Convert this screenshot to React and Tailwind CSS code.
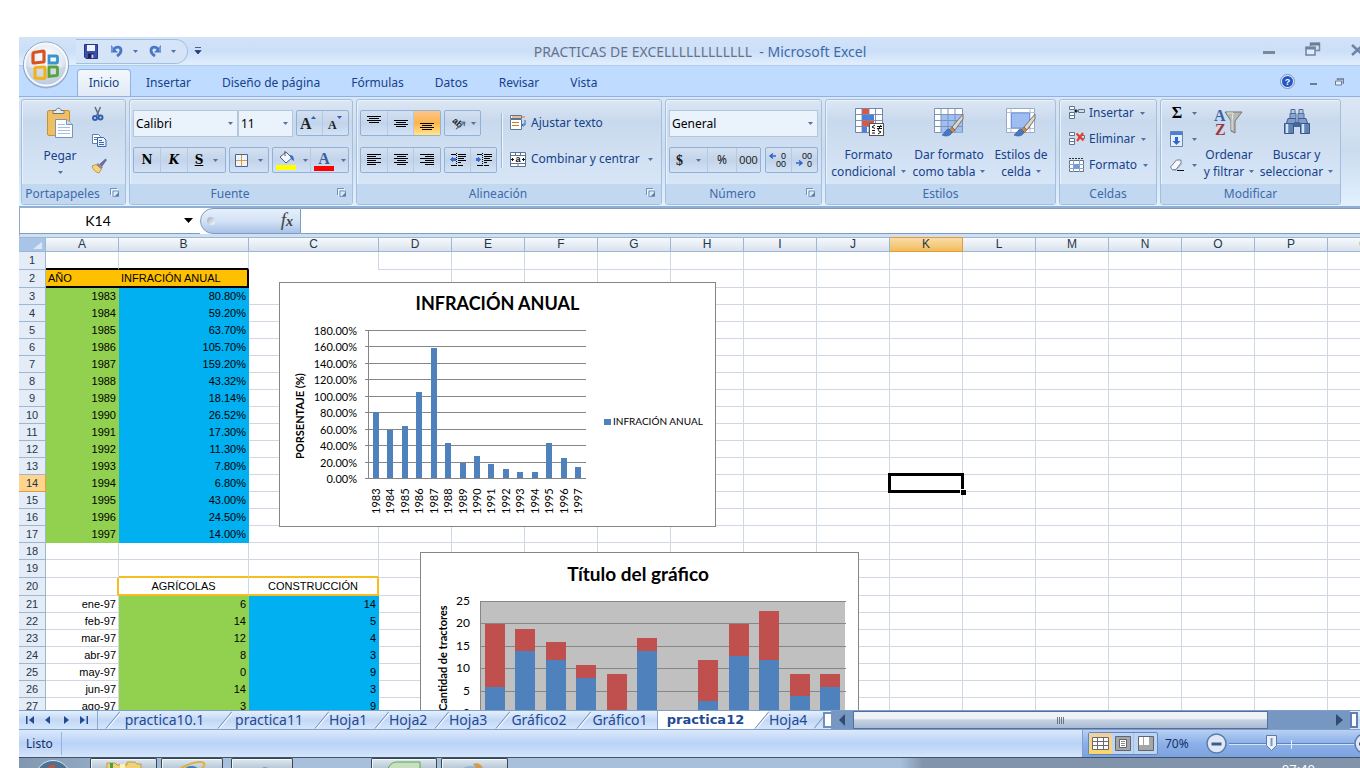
import React from "react";

const UI = "font-['Noto_Sans','Open_Sans',sans-serif]";

function Arrow({ className = "" }) {
  return (
    <svg viewBox="0 0 5 3" className={"h-[3px] w-[5px] shrink-0 " + className} aria-hidden="true">
      <path d="M0 0h5L2.500 3z" fill="#4f74a8" />
    </svg>
  );
}

function Launcher({ label }) {
  return (
    <button aria-label={label} className="absolute right-[5px] top-[3px] h-[11px] w-[11px]">
      <svg viewBox="0 0 11 11" width="11" height="11">
        <path d="M1.500 8V1.500H8" fill="none" stroke="#6f8fb8" />
        <path d="M2.500 9V2.500H9" fill="none" stroke="#f4f9ff" />
        <path d="M4 4h5.500v5.500H4z" fill="#dce8f6" stroke="#7b97ba" />
        <path d="M6 9h4V5z" fill="#5a7fae" />
      </svg>
    </button>
  );
}

function Group({ label, className, launcher, children }) {
  return (
    <section
      aria-label={label}
      className={
        "flex h-[106px] shrink-0 flex-col overflow-hidden rounded-[3px] border border-[#a3bfdd] bg-linear-to-b from-[#dce7f4] from-0% via-[#c9d9ed] via-20% to-[#dceafa] shadow-[inset_1px_1px_0_#e9f2fb] " +
        className
      }
    >
      <div className="flex flex-1 pt-[10px]">{children}</div>
      <div
        className={
          "relative h-[20px] whitespace-nowrap bg-[#c1d8f0] text-center leading-[19px] text-[#3e6aaa]" +
          (launcher ? " pr-[22px]" : "")
        }
      >
        {label}
        {launcher && <Launcher label={"Opciones de " + label} />}
      </div>
    </section>
  );
}

function Box({ className = "", children }) {
  return (
    <div
      className={
        "flex h-[26px] overflow-hidden rounded-[2px] border border-[#93b0d6] bg-linear-to-b from-[#d3e0f1] via-[#c3d4ea] to-[#d2e2f6] " +
        className
      }
    >
      {children}
    </div>
  );
}

function Tool({ label, className = "", children }) {
  return (
    <button
      aria-label={label}
      className={"flex h-full items-center justify-center border-r border-[#b4c9e4] last:border-r-0 " + className}
    >
      {children}
    </button>
  );
}

function Combo({ label, value, className }) {
  return (
    <label className={"relative block h-[27px] " + className}>
      <span className="sr-only">{label}</span>
      <select
        defaultValue={value}
        className="block h-full w-full appearance-none border border-[#b3c7e1] bg-[#eaf2fb] pl-[2px] text-[12px] leading-[24px] text-black outline-none"
      >
        <option>{value}</option>
      </select>
      <Arrow className="pointer-events-none absolute right-[5px] top-[12px]" />
    </label>
  );
}

function BigButton({ icon, lines, className = "" }) {
  return (
    <button className={"flex shrink-0 flex-col items-center leading-[17px] " + className}>
      <span className="flex h-[39px] items-start justify-center">{icon}</span>
      <span>{lines[0]}</span>
      <span className="flex items-center gap-[5px]">
        {lines[1]}
        <Arrow />
      </span>
    </button>
  );
}

function Lines({ rows }) {
  return (
    <svg width="16" height="16" viewBox="0 0 16 16" shapeRendering="crispEdges">
      {rows.map(([x, y, w], i) => (
        <rect key={i} x={x} y={y} width={w} height="1" fill="#000" />
      ))}
    </svg>
  );
}

const leftRows = [[1, 2, 14], [1, 4, 9], [1, 6, 14], [1, 8, 9], [1, 10, 14], [1, 12, 9]];
const centerRows = [[1, 2, 14], [4, 4, 9], [1, 6, 14], [4, 8, 9], [1, 10, 14], [4, 12, 9]];
const rightRows = [[1, 2, 14], [6, 4, 9], [1, 6, 14], [6, 8, 9], [1, 10, 14], [6, 12, 9]];
const topV = [[1, 1, 14], [3, 3, 10], [1, 5, 14], [3, 7, 10]];
const midV = [[1, 5, 14], [3, 7, 10], [1, 9, 14], [3, 11, 10]];
const botV = [[1, 8, 14], [3, 10, 10], [1, 12, 14], [3, 14, 10]];

function Indent({ flip }) {
  return (
    <svg width="18" height="16" viewBox="0 0 18 16" shapeRendering="crispEdges">
      <path d="M2 2.500h5M9 2.500h8M9 4.500h8M9 6.500h6M9 8.500h8M9 10.500h3M2 13.500h5M9 13.500h5" stroke="#000" />
      <path d="M7.500 1v14" stroke="#000" strokeDasharray="1 1" />
      <path d={flip ? "M6 7.500L3 4v2H1v3h2v2z" : "M1 7.500L4 4v2h3v3H4v2z"} fill="#3b6fd0" />
    </svg>
  );
}

function Orb() {
  return (
    <svg width="48" height="48" viewBox="0 0 48 48">
      <defs>
        <radialGradient id="orbFill" cx="50%" cy="35%" r="70%">
          <stop offset="0" stopColor="#ffffff" />
          <stop offset="0.55" stopColor="#e3e9f2" />
          <stop offset="1" stopColor="#9fb4d0" />
        </radialGradient>
      </defs>
      <circle cx="24" cy="24.500" r="23" fill="#7f9cc4" opacity="0.600" />
      <circle cx="24" cy="23.500" r="22.500" fill="url(#orbFill)" stroke="#8aa4c8" />
      <path d="M3 25a21 21 0 0 0 42 0c-12 4-30 4-42 0z" fill="#c3cfe0" opacity="0.600" />
      <circle cx="24" cy="23.500" r="21" fill="none" stroke="#f6f9fd" strokeWidth="2" />
      <path d="M12 11.500l9-1.500q1 0 1 1v9q0 1-1 1l-9 1q-1 0-1-1v-8q0-1 1-1.500z" fill="none" stroke="#d9531e" strokeWidth="3.200" />
      <path d="M27 15h7q1.500 0 1.500 1.500V21q0 1-1 1h-7.500z" fill="none" stroke="#3a93cf" strokeWidth="2.800" />
      <path d="M14 26.500l8-.5q1 0 1 1v9q0 1.500-1.500 1.500L14 37q-1 0-1-1v-8q0-1.500 1-1.500z" fill="none" stroke="#efb31b" strokeWidth="3.200" />
      <path d="M27 26h7.500q1 0 1 1v6.500q0 1-1 1L27 35.500z" fill="none" stroke="#57a239" strokeWidth="2.800" />
    </svg>
  );
}

function Undo({ flip }) {
  return (
    <svg width="14" height="14" viewBox="0 0 14 14" className={flip ? "-scale-x-100" : ""}>
      <path d="M3.500 5.500C6 2 11 2.500 11 6.500c0 2-1.500 4-4 5.500" fill="none" stroke="#4777c6" strokeWidth="2.800" />
      <path d="M1 1v7.500h7z" fill="#4777c6" />
      <path d="M2 2.500v5" stroke="#9dbdf0" />
    </svg>
  );
}

function Brush() {
  return (
    <g>
      <path d="M31 7L20 20l3 3L31 12z" fill="#d9d6cf" stroke="#77726a" />
      <path d="M20 20l-3 3 3 3 3-3z" fill="#c58a4c" stroke="#8a5a2a" strokeWidth="0.600" />
      <path d="M17 22c-3 0-4 4-7 6 4 2 9 1 10-3z" fill="#4a78bf" stroke="#2d559a" strokeWidth="0.600" />
    </g>
  );
}

const iconPaste = (
  <svg width="28" height="32" viewBox="0 0 28 32">
    <rect x="1.500" y="3.500" width="22" height="25" rx="1.500" fill="#f0bf62" stroke="#c7913a" />
    <path d="M7 6.500V3.500h3C10 .5 15 .5 15 3.500h3v3z" fill="#e7e9ec" stroke="#6e7681" />
    <path d="M9.500 12.500h11l6 5v13h-17z" fill="#fbfcff" stroke="#7a93b8" />
    <path d="M20.500 12.500v5h6" fill="#cddcf0" stroke="#7a93b8" />
    <path d="M12 17.500h7M12 20.500h12M12 23.500h12M12 26.500h12" stroke="#a9bcd8" />
  </svg>
);

const iconCut = (
  <svg width="14" height="16" viewBox="0 0 14 16">
    <path d="M4 1l4 9M9.500 1l-4 9" stroke="#5c6d86" strokeWidth="1.500" />
    <circle cx="4" cy="12" r="2" fill="none" stroke="#3361b0" strokeWidth="2" />
    <circle cx="9.500" cy="11.500" r="2" fill="none" stroke="#3361b0" strokeWidth="2" />
  </svg>
);

const iconCopy = (
  <svg width="16" height="16" viewBox="0 0 16 16">
    <path d="M1.500 2.500h6l2 2v7h-8z" fill="#fff" stroke="#5b7fb9" />
    <path d="M3 5.500h4M3 7.500h4" stroke="#5b7fb9" />
    <path d="M6.500 5.500h6l2.500 2.500v6.500H6.500z" fill="#eaf2ff" stroke="#3c66ad" />
    <path d="M8 8.500h3M8 10.500h5M8 12.500h5" stroke="#3c66ad" />
  </svg>
);

const iconPainter = (
  <svg width="16" height="16" viewBox="0 0 16 16">
    <path d="M14.500 1L9 6l2 2 4.500-6z" fill="#6b6f9a" stroke="#4a4f7c" strokeWidth="0.600" />
    <path d="M7 5l5 4-1.500 2L5 7z" fill="#8a7fb0" />
    <path d="M1 8l4-1.500 5.500 4.500L8 15c-3-.5-6-3-7-7z" fill="#f3d57a" stroke="#b58a32" strokeWidth="0.800" />
  </svg>
);

const iconCond = (
  <svg width="32" height="32" viewBox="0 0 32 32">
    <path d="M2.500 1.500h27v24h-27z" fill="#fff" stroke="#6f87ab" />
    <path d="M9 2h7v5H9zM9 13.500h12v6H9z" fill="#e8523b" />
    <path d="M9 7.500h12v6H9zM9 19.500h5v6H9z" fill="#4a7fdd" />
    <path d="M9 1.500v24M16 1.500v24M22.500 1.500v24M2.500 7.500h27M2.500 13.500h27M2.500 19.500h27" stroke="#6f87ab" strokeWidth="0.900" />
    <rect x="16.500" y="16.500" width="14" height="12" fill="#fff" stroke="#555" />
    <path d="M22 18l-3 2 3 1.500M19 23.500h3M19 26h3M24 19.500h5M24 21.500h5M28 18l-3 5M25 23.500l3 1.500-3 2" fill="none" stroke="#111" />
  </svg>
);

const iconTable = (
  <svg width="34" height="32" viewBox="0 0 34 32">
    <path d="M2.500 1.500h28v24h-28z" fill="#fff" stroke="#7f93b3" />
    <path d="M9 7.500h21v18H9z" fill="#9fc0f4" />
    <path d="M9 1.500v24M16 1.500v24M23 1.500v24M2.500 7.500h28M2.500 13.500h28M2.500 19.500h28" stroke="#7f93b3" />
    <Brush />
  </svg>
);

const iconStyles = (
  <svg width="34" height="32" viewBox="0 0 34 32">
    <path d="M2.500 1.500h28v24h-28z" fill="#fff" stroke="#9aabc6" />
    <path d="M7 1.500v24M26 1.500v24M2.500 5.500h28M2.500 21.500h28" stroke="#b3c0d6" />
    <path d="M7.500 6h18v15h-18z" fill="#9dbdf3" stroke="#6d95dd" />
    <Brush />
  </svg>
);

const iconSort = (
  <svg width="32" height="32" viewBox="0 0 32 32">
    <text x="1" y="14" fontFamily="Liberation Serif" fontWeight="700" fontSize="16" fill="#3b62a8">A</text>
    <text x="2" y="28" fontFamily="Liberation Serif" fontWeight="700" fontSize="16" fill="#a03a3a">Z</text>
    <path d="M12 5h17l-7 9v12l-4-2V14z" fill="#b9b9b4" stroke="#77776f" />
    <path d="M14 6h6l-1 8v9" fill="none" stroke="#e9e9e4" />
  </svg>
);

const iconFind = (
  <svg width="30" height="32" viewBox="0 0 30 32">
    <path d="M9 2.500h4v4H9zM17 2.500h4v4h-4z" fill="#b9cce8" stroke="#4f6c99" />
    <path d="M8 6.500h6v5H8zM16 6.500h6v5h-6z" fill="#8ba7d2" stroke="#4f6c99" />
    <path d="M6 11.500h8v5h2v-5h8l2 6H4z" fill="#7f9dcc" stroke="#3f5c8d" />
    <path d="M2.500 16.500h9v10h-9zM18.500 16.500h9v10h-9z" fill="#5f82b8" stroke="#3a5788" />
    <path d="M5 17v9M21 17v9" stroke="#d5e2f5" strokeWidth="2.500" />
    <path d="M12 15h6v5h-6z" fill="#45659b" />
  </svg>
);

function CellsIcon({ kind }) {
  return (
    <svg width="17" height="16" viewBox="0 0 17 16">
      {kind === "fmt" ? (
        <g>
          <path d="M1.500 3.500h14v11h-14z" fill="#fff" stroke="#5d7391" />
          <path d="M5.500 3v12M11.500 3v12M1 7.500h15M1 11.500h15" stroke="#8da3c2" />
          <path d="M6 7.500h5v4H6z" fill="#6d9be8" />
          <path d="M1 1.500h14" stroke="#333" strokeDasharray="2 1" />
        </g>
      ) : (
        <g>
          <path d="M1.500 1.500h5v3h-5zM1.500 7.500h5v3h-5zM1.500 10.500h5v3h-5z" fill="#fff" stroke="#5d7391" />
          <path d="M10.500 4.500h6v3h-6z" fill="#cfe0f5" stroke="#5d7391" />
          {kind === "ins" ? (
            <path d="M10 6H7M8.500 4.500L7 6l1.500 1.500" fill="none" stroke="#111" strokeWidth="1.200" />
          ) : (
            <path d="M8.500 2.500l7 7M15 2l-6 8" stroke="#e8402a" strokeWidth="2.200" />
          )}
        </g>
      )}
    </svg>
  );
}

function TitleBar() {
  return (
    <header className="relative flex h-[29px] shrink-0 items-center border-b border-[#b0cdec] bg-linear-to-b from-[#d3e3f8] via-[#cbdff8] to-[#e2effc]">
      <div className="ml-[57px] flex h-[25px] w-[112px] items-center rounded-r-[13px] border-y border-r border-[#a5bfdf] bg-[#d5e4f6]">
        <button aria-label="Guardar" className="ml-[8px]">
          <svg width="14" height="15" viewBox="0 0 14 15">
            <path d="M.5 .5h13v14H2l-1.500-1.500z" fill="#3b4fb0" stroke="#27347f" />
            <path d="M3 1h8v6H3z" fill="#eef4ff" />
            <path d="M4 9.500h6V14H4z" fill="#1b2350" />
            <path d="M7.500 10.500h2V14h-2z" fill="#cfd8ee" />
          </svg>
        </button>
        <button aria-label="Deshacer" className="ml-[12px] flex items-center gap-[9px]">
          <Undo />
          <Arrow />
        </button>
        <button aria-label="Rehacer" className="ml-[10px] flex items-center gap-[9px]">
          <Undo flip />
          <Arrow />
        </button>
      </div>
      <button aria-label="Personalizar barra" className="ml-[6px]">
        <svg width="8" height="8" viewBox="0 0 8 8">
          <path d="M1 0.500h6M1 3.500h6L4 7z" fill="#23407a" stroke="#23407a" strokeWidth="0.800" />
        </svg>
      </button>
      <h1 className="flex-1 whitespace-pre pr-[65px] text-center text-[14px] text-[#3e6aaa]">
        <span className="text-[#68718c]">PRACTICAS DE EXCELLLLLLLLLLLL</span>
        {"  - Microsoft Excel"}
      </h1>
      <div className="flex items-center gap-[30px]">
        <button aria-label="Minimizar" className="pt-[4px]">
          <svg width="12" height="4" viewBox="0 0 12 4"><path d="M0 0h12v3H0z" fill="#7c8798" /></svg>
        </button>
        <button aria-label="Restaurar" className="-mt-[4px]">
          <svg width="16" height="14" viewBox="0 0 16 14">
            <path d="M5.500 4V1.500h9v7h-4" fill="none" stroke="#7c8798" strokeWidth="1.500" />
            <path d="M5 2h10" stroke="#6f7b8e" strokeWidth="3" />
            <path d="M1 5.500h9v7.500h-9z" fill="#e2ecf8" stroke="#6d83a8" strokeWidth="1.500" />
            <path d="M.5 6h10" stroke="#6d83a8" strokeWidth="3" />
          </svg>
        </button>
        <button aria-label="Cerrar" className="-mt-[3px]">
          <svg width="9" height="12" viewBox="0 0 9 12">
            <path d="M1 1l11 10M12 1L1 11" stroke="#6d84a8" strokeWidth="2.500" />
          </svg>
        </button>
      </div>
      <button aria-label="Botón de Office" className="absolute left-[3px] top-[4px] z-10">
        <Orb />
      </button>
    </header>
  );
}

const menuTabs = ["Insertar", "Diseño de página", "Fórmulas", "Datos", "Revisar", "Vista"];

function MenuTabs() {
  return (
    <nav className="flex h-[30px] shrink-0 items-end bg-[#bfdbff]">
      <button className="ml-[58px] h-[27px] w-[54px] rounded-t-[4px] border border-b-0 border-[#8db2e3] bg-linear-to-b from-[#f3f8fd] to-[#e0eaf6] text-[#15428b]">
        Inicio
      </button>
      <div className="flex flex-1 gap-[31px] pl-[15px]">
        {menuTabs.map((t) => (
          <button key={t} className="h-[26px] text-[12px] text-[#15428b]">{t}</button>
        ))}
      </div>
      <div className="mb-[7px] mr-[16px] flex items-center gap-[15px]">
        <button aria-label="Ayuda">
          <svg width="15" height="15" viewBox="0 0 15 15">
            <circle cx="7.500" cy="7.500" r="7" fill="#dfeaf8" stroke="#7793c0" />
            <circle cx="7.500" cy="7.500" r="5.500" fill="#2456c4" />
            <text x="7.500" y="11" textAnchor="middle" fontFamily="Liberation Sans" fontWeight="700" fontSize="9" fill="#fff">?</text>
          </svg>
        </button>
        <button aria-label="Minimizar libro" className="pt-[5px]">
          <svg width="7" height="3" viewBox="0 0 7 3"><path d="M0 0h7v2H0z" fill="#6f7b8e" /></svg>
        </button>
        <button aria-label="Restaurar libro" className="pl-[3px]">
          <svg width="9" height="8" viewBox="0 0 9 8">
            <path d="M2.500 2V1h6v4H7.500" fill="none" stroke="#6f7b8e" strokeWidth="1.500" />
            <path d="M.5 3h6v4h-6z" fill="#e7effa" stroke="#6f7b8e" />
          </svg>
        </button>
      </div>
    </nav>
  );
}

function Ribbon() {
  return (
    <div className="flex shrink-0 gap-[3px] border-b-2 border-t border-b-[#8fb0d4] border-t-[#8db2e3] bg-linear-to-b from-[#dbe6f4] via-[#cbdcf0] to-[#e3f1fd] pb-[1px] pl-[2px] pt-[2px] text-[12px] text-[#15428b]">
      <Group label="Portapapeles" className="w-[105px]" launcher>
        <button className="-mt-[3px] ml-[14px] flex w-[48px] flex-col items-center">
          {iconPaste}
          <span className="mt-[7px] leading-[20px]">Pegar</span>
          <Arrow className="mt-[5px]" />
        </button>
        <div className="-mt-[4px] ml-[7px] flex flex-col gap-[10px]">
          <button aria-label="Cortar">{iconCut}</button>
          <button aria-label="Copiar">{iconCopy}</button>
          <button aria-label="Copiar formato">{iconPainter}</button>
        </div>
      </Group>

      <Group label="Fuente" className="w-[224px]" launcher>
        <div className="flex flex-col gap-[10px] pl-[3px]">
          <div className="flex">
            <Combo label="Fuente" value="Calibri" className="w-[105px]" />
            <Combo label="Tamaño" value="11" className="w-[55px]" />
            <Box className="ml-[3px] w-[53px]">
              <Tool label="Aumentar tamaño" className="w-[26px]">
                <svg width="18" height="20" viewBox="0 0 18 20">
                  <text x="0" y="16" fontFamily="Liberation Serif" fontWeight="700" fontSize="16" fill="#222">A</text>
                  <path d="M11 6h5l-2.500-3z" fill="#2d5fb5" />
                </svg>
              </Tool>
              <Tool label="Disminuir tamaño" className="w-[26px]">
                <svg width="18" height="20" viewBox="0 0 18 20">
                  <text x="2" y="16" fontFamily="Liberation Serif" fontWeight="700" fontSize="12" fill="#222">A</text>
                  <path d="M11 3h5l-2.500 3z" fill="#2d5fb5" />
                </svg>
              </Tool>
            </Box>
          </div>
          <div className="flex gap-[3px]">
            <Box className="w-[93px] font-['DejaVu_Serif',serif] text-[12px] font-bold leading-[16px] text-black">
              <Tool label="Negrita" className="w-[27px]">N</Tool>
              <Tool label="Cursiva" className="w-[27px]"><i>K</i></Tool>
              <Tool label="Subrayado" className="flex-1 gap-[10px]">
                <span className="underline">S</span>
                <Arrow />
              </Tool>
            </Box>
            <Box className="w-[40px]">
              <Tool label="Bordes" className="w-full gap-[10px]">
                <svg width="13" height="13" viewBox="0 0 13 13">
                  <path d="M.5 .5h12v12H.5z" fill="#eef4fc" stroke="#4b678f" />
                  <path d="M6.500 1v11M1 6.500h11" stroke="#e09a3c" />
                </svg>
                <Arrow />
              </Tool>
            </Box>
            <Box className="w-[77px]">
              <Tool label="Color de relleno" className="w-[38px] gap-[7px]">
                <svg width="20" height="20" viewBox="0 0 20 20">
                  <path d="M4 7l6-5 6 6-6 5z" fill="#f3f6fb" stroke="#4d5f7c" />
                  <path d="M9 6V1" stroke="#4d5f7c" />
                  <path d="M14 5c3 0 4 2 4 6-2-1-3-2-4-4z" fill="#3f73c8" />
                  <path d="M0 15h20v5H0z" fill="#ffff00" />
                </svg>
                <Arrow />
              </Tool>
              <Tool label="Color de fuente" className="w-[37px] gap-[7px]">
                <svg width="20" height="22" viewBox="0 -2 20 22">
                  <text x="10" y="13" textAnchor="middle" fontFamily="Liberation Serif" fontWeight="700" fontSize="16" fill="#3c5f9e">A</text>
                  <path d="M0 15h20v5H0z" fill="#ff0000" />
                </svg>
                <Arrow />
              </Tool>
            </Box>
          </div>
        </div>
      </Group>

      <Group label="Alineación" className="w-[306px]" launcher>
        <div className="flex flex-col gap-[11px] pl-[3px]">
          <div className="flex gap-[3px]">
            <Box className="w-[81px]">
              <Tool label="Alinear arriba" className="w-[27px]"><Lines rows={topV} /></Tool>
              <Tool label="Alinear en el medio" className="w-[26px]"><Lines rows={midV} /></Tool>
              <Tool label="Alinear abajo" className="w-[26px] bg-linear-to-b from-[#fbc68b] via-[#ffb347] to-[#ffe68c]"><Lines rows={botV} /></Tool>
            </Box>
            <Box className="w-[37px]">
              <Tool label="Orientación" className="w-full gap-[4px]">
                <svg width="18" height="18" viewBox="0 0 18 18">
                  <text x="3" y="9" fontFamily="Liberation Sans" fontWeight="700" fontSize="9" fill="#222" transform="rotate(42 5 8)">ab</text>
                  <path d="M7 15L16 8M16 8h-4M16 8l-1 4" fill="none" stroke="#5b6d88" strokeWidth="1.200" />
                </svg>
                <Arrow />
              </Tool>
            </Box>
          </div>
          <div className="flex gap-[3px]">
            <Box className="w-[81px]">
              <Tool label="Izquierda" className="w-[27px]"><Lines rows={leftRows} /></Tool>
              <Tool label="Centrar" className="w-[26px]"><Lines rows={centerRows} /></Tool>
              <Tool label="Derecha" className="w-[26px]"><Lines rows={rightRows} /></Tool>
            </Box>
            <Box className="w-[53px]">
              <Tool label="Disminuir sangría" className="w-[26px]"><Indent /></Tool>
              <Tool label="Aumentar sangría" className="w-[25px]"><Indent flip /></Tool>
            </Box>
          </div>
        </div>
        <div className="ml-[4px] mt-[3px] h-[55px] w-[2px] border-r border-[#eef5fd] bg-[#9db8d8]" />
        <div className="ml-[7px] flex flex-col gap-[10px]">
          <button className="flex h-[26px] items-center gap-[5px]">
            <svg width="16" height="16" viewBox="0 0 16 16">
              <path d="M.5 .5h11v3H.5zM.5 4.500h11v10H.5z" fill="#fff" stroke="#5d7391" />
              <path d="M2 2h13M2 7.500h7M2 10.500h7" stroke="#c47f2d" />
              <path d="M15 5v5h-3M13.500 8.500L12 10l1.500 1.500" fill="none" stroke="#2f62b5" />
            </svg>
            Ajustar texto
          </button>
          <button className="flex h-[26px] items-center gap-[5px]">
            <svg width="16" height="15" viewBox="0 0 16 15">
              <path d="M.5 .5h15v14H.5z" fill="#fff" stroke="#5d7391" />
              <path d="M1 3.500h14M1 11.500h14M5.500 1v3M10.500 1v3M8 11v3" stroke="#5d7391" />
              <path d="M1 7.500h3M12 7.500h3M2.500 6v3M13.500 6v3" stroke="#111" />
              <text x="8" y="10" textAnchor="middle" fontFamily="Liberation Sans" fontWeight="700" fontSize="9" fill="#111">a</text>
            </svg>
            Combinar y centrar
            <Arrow className="ml-[3px]" />
          </button>
        </div>
      </Group>

      <Group label="Número" className="w-[157px]" launcher>
        <div className="flex flex-col gap-[10px] pl-[3px]">
          <Combo label="Formato de número" value="General" className="w-[149px]" />
          <div className="flex gap-[4px] text-[#222]">
            <Box className="w-[92px]">
              <Tool label="Moneda" className="w-[38px] gap-[13px]">
                <span className="font-['Liberation_Serif',serif] text-[14px] font-bold">$</span>
                <Arrow />
              </Tool>
              <Tool label="Porcentaje" className="w-[29px]">%</Tool>
              <Tool label="Millares" className="flex-1">
                <span className="font-['Liberation_Sans_Narrow','Liberation_Sans',sans-serif] text-[11px]">000</span>
              </Tool>
            </Box>
            <Box className="w-[53px]">
              {["left", "right"].map((d) => (
                <Tool key={d} label={d === "left" ? "Aumentar decimales" : "Disminuir decimales"} className="w-[26px]">
                  <svg width="18" height="18" viewBox="0 0 18 18" fontFamily="Liberation Sans" fontSize="9" fill="#111">
                    <text x="17" y="8" textAnchor="end">{d === "left" ? "0" : "00"}</text>
                    <text x="17" y="16" textAnchor="end">{d === "left" ? "00" : "0"}</text>
                    {d === "left" ? (
                      <path d="M1 5h6M4 2.500L1 5l3 2.500" fill="none" stroke="#2f62c5" strokeWidth="1.400" />
                    ) : (
                      <path d="M1 12h6M4 9.500L7 12l-3 2.500" fill="none" stroke="#2f62c5" strokeWidth="1.400" />
                    )}
                  </svg>
                </Tool>
              ))}
            </Box>
          </div>
        </div>
      </Group>

      <Group label="Estilos" className="w-[231px]">
        <div className="-mt-[3px] flex gap-[3px] pl-[4px]">
          <BigButton icon={iconCond} lines={["Formato", "condicional"]} className="w-[77px]" />
          <BigButton icon={iconTable} lines={["Dar formato", "como tabla"]} className="w-[78px]" />
          <BigButton icon={iconStyles} lines={["Estilos de", "celda"]} className="w-[60px]" />
        </div>
      </Group>

      <Group label="Celdas" className="w-[98px]">
        <div className="-mt-[10px] flex flex-col pl-[8px]">
          {[["ins", "Insertar"], ["del", "Eliminar"], ["fmt", "Formato"]].map(([k, t]) => (
            <button key={k} className="flex h-[26px] items-center gap-[4px]">
              <CellsIcon kind={k} />
              {t}
              <Arrow className="ml-[2px]" />
            </button>
          ))}
        </div>
      </Group>

      <Group label="Modificar" className="w-[181px]">
        <div className="-mt-[10px] flex flex-col pl-[8px]">
          <button aria-label="Autosuma" className="flex h-[26px] items-center gap-[7px]">
            <span className="w-[16px] text-center font-['Liberation_Serif',serif] text-[16px] font-bold text-black">Σ</span>
            <Arrow />
          </button>
          <button aria-label="Rellenar" className="flex h-[26px] items-center gap-[7px]">
            <svg width="16" height="16" viewBox="0 0 16 16">
              <path d="M1.500 .5h12v15h-12z" fill="#e4eefc" stroke="#6b84aa" />
              <path d="M2 1h11v3H2z" fill="#4b7fdc" />
              <path d="M6 6h3v4h2.500l-4 4-4-4H6z" fill="#2f66cf" />
            </svg>
            <Arrow />
          </button>
          <button aria-label="Borrar" className="flex h-[26px] items-center gap-[7px]">
            <svg width="16" height="14" viewBox="0 0 16 14">
              <path d="M1.500 9l6-7h4.500v3L7 11.500H3z" fill="#f7f9fc" stroke="#71809a" />
              <path d="M3 12l4 .5 6-7" fill="none" stroke="#9fb0c8" />
              <path d="M8 12.500h7" stroke="#111" />
            </svg>
            <Arrow />
          </button>
        </div>
        <div className="-mt-[3px] flex pl-[3px]">
          <BigButton icon={iconSort} lines={["Ordenar", "y filtrar"]} className="w-[58px]" />
          <BigButton icon={iconFind} lines={["Buscar y", "seleccionar"]} className="w-[77px]" />
        </div>
      </Group>
    </div>
  );
}

function FormulaBar() {
  return (
    <div className="flex h-[29px] shrink-0 border-b-[3px] border-l border-b-[#cfe0f5] border-l-[#8ba6c8] bg-white">
      <input
        aria-label="Cuadro de nombres"
        defaultValue="K14"
        className="w-[156px] border-b border-[#7f9cc0] bg-white text-center font-['Lato',sans-serif] text-[14px] text-black outline-none"
      />
      <button aria-label="Nombres" className="flex w-[24px] items-center justify-center border-b border-[#7f9cc0]">
        <svg width="9" height="5" viewBox="0 0 9 5"><path d="M0 0h9L4.500 5z" fill="#000" /></svg>
      </button>
      <div className="flex w-[101px] items-center justify-between rounded-l-[13px] border border-[#7f9cc0] bg-linear-to-b from-[#e7f0fb] via-[#d3e2f5] to-[#a8c2e6] pl-[6px] pr-[7px]">
        <span className="h-[8px] w-[8px] rounded-full bg-linear-to-br from-[#9caac0] to-white" />
        <button aria-label="Insertar función" className="font-['Liberation_Serif',serif] text-[19px] italic leading-[20px] text-[#444]">
          f<span className="text-[14px] font-bold">x</span>
        </button>
      </div>
      <input aria-label="Barra de fórmulas" className="min-w-0 flex-1 border-b border-t border-[#7f9cc0] bg-white outline-none" />
    </div>
  );
}

const columns = "ABCDEFGHIJKLMNOPQ".split("");
const years = [
  ["1983", 80.8], ["1984", 59.2], ["1985", 63.7], ["1986", 105.7], ["1987", 159.2],
  ["1988", 43.32], ["1989", 18.14], ["1990", 26.52], ["1991", 17.3], ["1992", 11.3],
  ["1993", 7.8], ["1994", 6.8], ["1995", 43], ["1996", 24.5], ["1997", 14],
];
const months = [
  ["ene-97", 6, 14], ["feb-97", 14, 5], ["mar-97", 12, 4], ["abr-97", 8, 3],
  ["may-97", 0, 9], ["jun-97", 14, 3], ["ago-97", 3, 9],
];

const grid = "border-b border-r border-[#d0d7e5] ";
const green = "border-b border-r border-[#92d050] bg-[#92d050] ";
const blue = "border-b border-r border-[#00b0f0] bg-[#00b0f0] ";

function cellFor(col, row) {
  if (row === 1) {
    if (col === "A" || col === "B") return { c: "border-b-2 border-r border-b-black border-r-[#d0d7e5]" };
    if (col === "C") return { c: "border-r border-[#d0d7e5]" };
  }
  if (row === 2) {
    if (col === "A") return { c: "border-b-2 border-black bg-[#ffc000] text-left", t: "AÑO" };
    if (col === "B") return { c: "border-b-2 border-r-2 border-black bg-[#ffc000] text-left", t: "INFRACIÓN ANUAL" };
    if (col === "C") return { c: "" };
  }
  if (row >= 3 && row <= 17) {
    if (col === "A") return { c: green + "text-right", t: years[row - 3][0] };
    if (col === "B") return { c: blue + "text-right", t: years[row - 3][1].toFixed(2) + "%" };
  }
  if (row === 19 && (col === "B" || col === "C"))
    return { c: "border-b-2 border-r border-b-[#f5bd1f] border-r-[#d0d7e5]" };
  if (row === 20) {
    if (col === "A") return { c: "border-b border-r-2 border-b-[#d0d7e5] border-r-[#f5bd1f]" };
    if (col === "B") return { c: "border-b-2 border-r border-b-[#f5bd1f] border-r-[#d0d7e5] text-center", t: "AGRÍCOLAS" };
    if (col === "C") return { c: "border-b-2 border-r-2 border-[#f5bd1f] text-center", t: "CONSTRUCCIÓN" };
  }
  if (row >= 21 && months[row - 21]) {
    const m = months[row - 21];
    if (col === "A") return { c: grid + "text-right", t: m[0] };
    if (col === "B") return { c: green + "text-right", t: m[1] };
    if (col === "C") return { c: blue + "text-right", t: m[2] };
  }
  return { c: grid };
}

function InflationChart() {
  const base = 478.5;
  const step = 217 / 15;
  return (
    <svg
      className="absolute left-[260px] top-[45px]"
      width="437"
      height="245"
      viewBox="279 282 437 245"
      fontFamily="Lato, sans-serif"
      fontSize="11"
      shapeRendering="crispEdges"
      role="img"
      aria-label="INFRACIÓN ANUAL"
    >
      <rect x="279.500" y="282.500" width="436" height="244" fill="#fff" stroke="#868686" />
      <text x="497.500" y="310" textAnchor="middle" fontSize="18" fontWeight="700">INFRACIÓN ANUAL</text>
      <text transform="translate(304 459) rotate(-90)" fontSize="11" fontWeight="700">PORSENTAJE (%)</text>
      {Array.from({ length: 10 }, (_, i) => {
        const y = Math.round(base - (i * 148) / 9 - 0.5) + 0.5;
        return (
          <g key={i}>
            <path d={"M365 " + y + "H586"} stroke="#868686" />
            <text x="357" y={y + 4} textAnchor="end">{(i * 20).toFixed(2) + "%"}</text>
          </g>
        );
      })}
      <path d="M368.500 330V479" stroke="#868686" />
      {years.map(([year, v], i) => {
        const cx = 368.5 + step * (i + 0.5);
        const h = Math.round((v * 147) / 180);
        return (
          <g key={year}>
            <rect x={Math.round(cx - 3)} y={478 - h} width="6" height={h} fill="#4f81bd" />
            <text transform={"translate(" + (cx + 4) + " 514) rotate(-90)"}>{year}</text>
          </g>
        );
      })}
      <rect x="604" y="419" width="7" height="6" fill="#4f81bd" />
      <text x="613" y="425" fontSize="10">INFRACIÓN ANUAL</text>
    </svg>
  );
}

const stacks = [
  [6, 14], [14, 5], [12, 4], [8, 3], [0, 9], [14, 3],
  [0, 0], [3, 9], [13, 7], [12, 11], [4, 5], [6, 3],
];

function TractorChart() {
  const y = (v) => Math.round(714 - v * 4.5);
  return (
    <svg
      className="absolute left-[401px] top-[315px]"
      width="439"
      height="240"
      viewBox="420 552 439 240"
      fontFamily="Lato, sans-serif"
      fontSize="12"
      shapeRendering="crispEdges"
      role="img"
      aria-label="Título del gráfico"
    >
      <rect x="420.500" y="552.500" width="438" height="239" fill="#fff" stroke="#868686" />
      <text x="638" y="581" textAnchor="middle" fontSize="19" fontWeight="700">Título del gráfico</text>
      <text transform="translate(447 711) rotate(-90)" fontSize="11" fontWeight="700">Cantidad de tractores</text>
      <rect x="481" y="601" width="364" height="113" fill="#c0c0c0" />
      {[0, 5, 10, 15, 20, 25].map((v) => (
        <g key={v}>
          <path d={"M480 " + (y(v) - 0.5) + "H846"} stroke="#868686" />
          <text x="470" y={y(v) + 3} textAnchor="end">{v}</text>
        </g>
      ))}
      <path d="M480.500 601V714" stroke="#868686" />
      {stacks.map(([a, b], i) => {
        const x = Math.round(485 + i * 30.45);
        return (
          <g key={i}>
            <rect x={x} y={y(a + b)} width="20" height={y(a) - y(a + b)} fill="#c0504d" />
            <rect x={x} y={y(a)} width="20" height={714 - y(a)} fill="#4f81bd" />
          </g>
        );
      })}
    </svg>
  );
}

function Sheet() {
  return (
    <main className="relative min-h-0 flex-1 overflow-hidden bg-white">
      <table className="w-[1252px] table-fixed border-separate border-spacing-0 font-['Liberation_Sans',Arial,sans-serif] text-[11px] leading-[15px] text-black">
        <colgroup>
          <col className="w-[27px]" />
          {columns.map((c) => (
            <col key={c} className={c === "B" || c === "C" ? "w-[130px]" : "w-[73px]"} />
          ))}
        </colgroup>
        <thead>
          <tr className="h-[15px] text-[12px] leading-[13px]">
            <th aria-label="Seleccionar todo" className="border-b border-r border-t border-[#9eb6ce] bg-[#a9c4e9] p-0">
              <svg width="26" height="13" viewBox="0 0 26 13" className="block"><path d="M23 4v7h-9z" fill="#dce8f8" /></svg>
            </th>
            {columns.map((c) => (
              <th
                key={c}
                scope="col"
                className={
                  "border-b border-r border-t p-0 font-normal text-[#26364a] " +
                  (c === "K"
                    ? "border-[#e59a3c] bg-linear-to-b from-[#f9dca6] to-[#f1bd59]"
                    : "border-[#9eb6ce] bg-linear-to-b from-[#f7fafd] to-[#d8e1ed]")
                }
              >
                {c}
              </th>
            ))}
          </tr>
        </thead>
        <tbody>
          {Array.from({ length: 27 }, (_, i) => i + 1).map((row) => (
            <tr key={row} className={[1, 2, 19, 20].includes(row) ? "h-[18px]" : "h-[17px]"}>
              <th
                scope="row"
                className={
                  "border-b border-r p-0 font-normal text-[#26364a] " +
                  (row === 14 ? "border-[#e59a3c] bg-[#ffd58d]" : "border-[#9eb6ce] bg-[#e4ecf7]")
                }
              >
                {row}
              </th>
              {columns.map((col) => {
                const { c, t } = cellFor(col, row);
                const active = col === "K" && row === 14;
                return (
                  <td key={col} className={"whitespace-nowrap px-[2px] py-0 " + c + (active ? " relative" : "")}>
                    {t}
                    {active && (
                      <span className="absolute -bottom-[2px] -left-[2px] -right-[2px] -top-[2px] border-[3px] border-black">
                        <span className="absolute -bottom-[5px] -right-[5px] h-[6px] w-[6px] border-l border-t border-white bg-black" />
                      </span>
                    )}
                  </td>
                );
              })}
            </tr>
          ))}
        </tbody>
      </table>
      <InflationChart />
      <TractorChart />
    </main>
  );
}

const sheetTabs = [
  ["practica10.1", "w-[112px]"],
  ["practica11", "w-[97px]"],
  ["Hoja1", "w-[60px]"],
  ["Hoja2", "w-[60px]"],
  ["Hoja3", "w-[61px]"],
  ["Gráfico2", "w-[81px]"],
  ["Gráfico1", "w-[81px]"],
  ["practica12", "w-[97px]"],
  ["Hoja4", "w-[60px]"],
];

function SheetTabs() {
  const nav = [
    ["Primera hoja", "M1 1h1.500v8H1zM9 1v8L4 5z"],
    ["Hoja anterior", "M7 1v8L2 5z"],
    ["Hoja siguiente", "M3 1v8l5-4z"],
    ["Última hoja", "M1 1v8l5-4zM7.500 1H9v8H7.500z"],
  ];
  return (
    <div className="flex h-[20px] shrink-0 border-b border-t border-[#7f9fcb] bg-linear-to-b from-[#e3effd] via-[#c3d8f5] to-[#d6e6fb]">
      <div className="flex w-[79px] items-center gap-[8px] border-r border-[#8aa9d2] pl-[6px]">
        {nav.map(([label, d]) => (
          <button key={label} aria-label={label}>
            <svg width="10" height="10" viewBox="0 0 10 10"><path d={d} fill="#1f4a94" /></svg>
          </button>
        ))}
      </div>
      <div className="flex pl-[7px]">
        {sheetTabs.map(([name, w]) => {
          const on = name === "practica12";
          return (
            <button
              key={name}
              className={
                "flex h-[18px] shrink-0 items-center whitespace-nowrap leading-[18px] text-[#1f4a94] " +
                w +
                (on
                  ? " bg-white font-['DejaVu_Sans',sans-serif] text-[13px] font-bold"
                  : " text-[14px]")
              }
            >
              {on ? (
                <svg width="8" height="18" viewBox="0 0 8 18" className="shrink-0">
                  <path d="M.5 0v18" stroke="#8aa4c8" />
                </svg>
              ) : (
                <svg width="15" height="18" viewBox="0 0 15 18" className="shrink-0">
                  {name === "Hoja4" && <path d="M0 0h15L0 18z" fill="#fff" />}
                  <path d="M1 17.500L15 .5" stroke="#6f8fbd" />
                  <path d="M2.500 17.500L16 1.500" stroke="#fff" />
                </svg>
              )}
              <span className="flex-1 pr-[8px] text-center">{name}</span>
            </button>
          );
        })}
      </div>
      <svg width="9" height="18" viewBox="0 0 9 18" className="shrink-0"><path d="M0 17.500L10 5" stroke="#6f8fbd" /></svg>
      <div className="my-px w-[8px] shrink-0 border-2 border-r-0 border-[#6f8fbd] bg-white" />
      <div className="flex min-w-0 flex-1 items-center bg-[#7797c3]">
        <button aria-label="Desplazar a la izquierda" className="flex w-[22px] shrink-0 justify-center">
          <svg width="7" height="12" viewBox="0 0 7 12"><path d="M6 0v12L0 6z" fill="#36496f" /></svg>
        </button>
        <div className="flex h-full w-[80%] items-center justify-center gap-px border border-[#53709d] bg-linear-to-b from-[#eef2f6] from-40% via-[#c5d2e2] via-50% to-[#a9bbd2]">
          <span className="h-[7px] w-px bg-[#6b7684]" />
          <span className="h-[7px] w-px bg-[#6b7684]" />
          <span className="h-[7px] w-px bg-[#6b7684]" />
          <span className="h-[7px] w-px bg-[#6b7684]" />
        </div>
        <button aria-label="Desplazar a la derecha" className="ml-auto mr-[7px]">
          <svg width="7" height="12" viewBox="0 0 7 12"><path d="M0 0v12l7-6z" fill="#36496f" /></svg>
        </button>
      </div>
      <div className="my-px mr-[2px] w-[8px] shrink-0 border-2 border-[#5d7fb1] bg-white" />
    </div>
  );
}

function StatusBar() {
  return (
    <footer className="flex h-[27px] shrink-0 items-stretch bg-linear-to-b from-[#dbe9fb] from-0% via-[#b9d2f7] via-50% to-[#d5e5fa] text-[12px] text-[#15305f]">
      <div className="my-[2px] flex w-[43px] items-center border-r border-[#94b3de] pl-[7px]">Listo</div>
      <div className="flex-1" />
      <div className="flex items-center border-l border-[#7f9fd0] bg-linear-to-b from-[#b8d0f3] via-[#8bb0ea] via-50% to-[#7da3de] pl-[5px]">
        <div className="flex h-[23px] w-[70px] rounded-[2px] border border-[#6287bf] bg-[#bdd4f3]">
          <button aria-label="Normal" className="flex w-[23px] items-center justify-center bg-linear-to-b from-[#f0cfa5] to-[#fcd765]">
            <svg width="17" height="13" viewBox="0 0 17 13">
              <path d="M.5 .5h16v12H.5z" fill="#fff" stroke="#6b6b6b" />
              <path d="M0 4.500h17M0 8.500h17M5.500 0v13M11.500 0v13" stroke="#6b6b6b" />
            </svg>
          </button>
          <button aria-label="Diseño de página" className="flex w-[21px] items-center justify-center">
            <svg width="16" height="15" viewBox="0 0 16 15">
              <path d="M.5 .5h15v14H.5z" fill="#a6a6a6" stroke="#5f6570" />
              <path d="M4.500 3.500h7v8h-7z" fill="#fff" stroke="#5f6570" />
              <path d="M6 5.500h4M6 7.500h4M6 9.500h4" stroke="#888" />
            </svg>
          </button>
          <button aria-label="Vista previa de salto de página" className="flex flex-1 items-center justify-center border-l border-[#a5c1ea]">
            <svg width="16" height="15" viewBox="0 0 16 15">
              <path d="M.5 .5h15v14H.5z" fill="#a6a6a6" stroke="#5f6570" />
              <path d="M1 1h4v8H1zM6 1h5v8H6z" fill="#fff" />
            </svg>
          </button>
        </div>
        <span className="w-[48px] pl-[7px]">70%</span>
        <button aria-label="Alejar">
          <svg width="21" height="21" viewBox="0 0 21 21">
            <circle cx="10.500" cy="10.500" r="9.500" fill="#dfe9f6" stroke="#5e7ba8" strokeWidth="1.500" />
            <path d="M5.500 9.500h10v3h-10z" fill="#3f5b8a" />
          </svg>
        </button>
        <div className="relative h-[27px] w-[127px]">
          <svg width="127" height="27" viewBox="0 0 127 27" className="block">
            <path d="M2 13.500h125" stroke="#5f82b8" />
            <path d="M2 14.500h125" stroke="#d8e6f9" />
            <path d="M64.500 10v9" stroke="#e5effc" />
            <path d="M39.500 5.500h10v10l-5 5-5-5z" fill="#e9f0fa" stroke="#5e7ba8" />
            <path d="M44.500 8v8" stroke="#7d97bf" strokeWidth="2" />
          </svg>
          <input aria-label="Zoom" type="range" min="10" max="190" defaultValue="70" className="absolute inset-0 h-full w-full opacity-0" />
        </div>
        <button aria-label="Acercar">
          <svg width="6" height="21" viewBox="0 0 6 21">
            <circle cx="10.500" cy="10.500" r="9.500" fill="#dfe9f6" stroke="#5e7ba8" strokeWidth="1.500" />
            <path d="M5 9.500h5v3H5z" fill="#3f5b8a" />
          </svg>
        </button>
      </div>
    </footer>
  );
}

const taskButton =
  "flex justify-center overflow-hidden rounded-t-[2px] border border-b-0 border-[#37474f] bg-linear-to-b from-[#dfe8f1] to-[#b9c8d6] shadow-[inset_1px_1px_0_#f5f9fc]";

function Taskbar() {
  return (
    <div className="flex h-[11px] shrink-0 overflow-hidden border-t border-[#3f5468] bg-linear-to-r from-[#8297b0] from-0% via-[#a8c0dc] via-[12%] to-[#a8c0dc]">
      <button aria-label="Inicio de Windows" className="flex w-[71px] justify-center">
        <svg width="36" height="10" viewBox="0 0 36 10">
          <circle cx="16" cy="20" r="17.500" fill="#4d7190" stroke="#dce8f2" />
          <path d="M10 10c2-3 5-4 8-3v3z" fill="#b55a48" />
        </svg>
      </button>
      <div className="flex gap-[4px]">
        <button aria-label="Explorador" className={taskButton + " w-[67px]"}>
          <svg width="38" height="10" viewBox="0 0 38 10">
            <path d="M2 10V4h8l2 2h10V3h8l2 2h4v5z" fill="#eed27b" stroke="#c29b3f" />
            <path d="M5 4h3v6H5z" fill="#4c9a46" />
            <path d="M15 5h5v5h-5z" fill="#fff0b8" />
          </svg>
        </button>
        <button aria-label="Internet Explorer" className={taskButton + " w-[62px]"}>
          <svg width="34" height="10" viewBox="0 0 34 10">
            <path d="M10 10c2-4 11-4 13 0" fill="#3f7fc0" />
            <path d="M5 10C12 5 25 1 29 4c1 1 0 3-2 5" fill="none" stroke="#e0b040" strokeWidth="2" />
          </svg>
        </button>
        <button aria-label="Mensajería" className={taskButton + " ml-[4px] w-[62px]"}>
          <svg width="20" height="10" viewBox="0 0 20 10"><circle cx="13" cy="13" r="5" fill="#6ea3c8" /></svg>
        </button>
        <span className="w-[70px]" />
        <button aria-label="Microsoft Excel" className={taskButton + " w-[66px]"}>
          <svg width="36" height="10" viewBox="0 0 36 10">
            <path d="M2 10c2-6 6-7 10-7h22v7z" fill="#c9e0c0" stroke="#5da64e" />
          </svg>
        </button>
        <button aria-label="Paint" className={taskButton + " w-[67px]"}>
          <svg width="36" height="10" viewBox="0 0 36 10">
            <path d="M5 10c3-3 9-4 14-2v2z" fill="#8fb6cc" />
            <path d="M16 5c4-2 9 0 10 5h-6z" fill="#d39a50" />
          </svg>
        </button>
      </div>
      <div className="flex flex-1 justify-end">
        <div className="w-[54%] overflow-hidden bg-linear-to-r from-[#8294ab]/0 from-0% to-[#8294ab] to-[5%] pr-[45px] pt-[3px] text-right text-[13px] leading-[16px] text-white">
          07:40
        </div>
      </div>
    </div>
  );
}

export default function App() {
  return (
    <div className={"flex h-screen min-h-[500px] flex-col overflow-hidden bg-white pl-[19px] pt-[37px] text-[12px] " + UI}>
      <TitleBar />
      <MenuTabs />
      <Ribbon />
      <FormulaBar />
      <Sheet />
      <SheetTabs />
      <StatusBar />
      <Taskbar />
    </div>
  );
}
